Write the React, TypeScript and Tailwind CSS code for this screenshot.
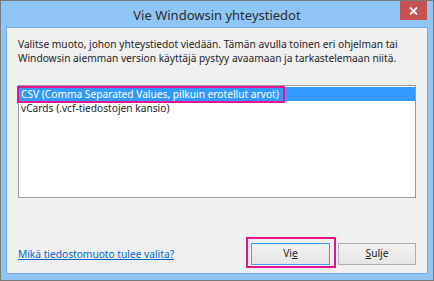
import React from 'react';

const font = { fontFamily: '"Noto Sans", "Open Sans", sans-serif' };

export default function App() {
  return (
    <div
      className="relative w-[434px] h-[281px] border border-[#7a7a7a] bg-[#8fc6f6] flex flex-col text-[#1e1e1e]"
      style={font}
    >
      {/* title bar */}
      <div className="relative h-[26px] flex items-center justify-center">
        <span className="text-[13px] text-[#2b2b2b] leading-none mt-[2px]">
          Vie Windowsin yhteystiedot
        </span>
        <div className="absolute right-[6px] top-0 w-[27px] h-[19px] bg-[#c75050] flex items-center justify-center">
          <svg width="9" height="8" viewBox="0 0 9 8">
            <path d="M1 0.5 L8 7.5 M8 0.5 L1 7.5" stroke="#fff" strokeWidth="1.8" />
          </svg>
        </div>
      </div>

      {/* client area */}
      <div className="mx-[5px] mb-[6px] flex-1 border border-[#6fadeb] bg-[#f0f0f0] flex flex-col px-[11px] pt-[9px] pb-[8px]">
        <p className="text-[10.2px] leading-[14px] text-[#1e1e1e]">
          Valitse muoto, johon yhteystiedot viedään. Tämän avulla toinen eri ohjelman tai
          <br />
          Windowsin aiemman version käyttäjä pystyy avaamaan ja tarkastelemaan niitä.
        </p>

        <div className="mt-[20px] h-[113px] border border-[#9b9b9b] bg-white pt-[1px] text-[10.2px] leading-[14px]">
          <div className="bg-[#3399ff] text-white px-[2px] h-[14px]">
            CSV (Comma Separated Values, pilkuin erotellut arvot)
          </div>
          <div className="px-[2px] h-[14px]">vCards (.vcf-tiedostojen kansio)</div>
        </div>

        <div className="mt-auto flex items-center">
          <a className="text-[10.2px] text-[#0066cc] underline mt-[2px]">
            Mikä tiedostomuoto tulee valita?
          </a>
          <div className="ml-auto flex gap-[8px]">
            <button className="w-[79px] h-[22px] border border-[#3c9bf0] bg-gradient-to-b from-[#f2f2f2] to-[#e5e5e5] text-[10.2px] text-[#1e1e1e] flex items-center justify-center">
              Vi<span className="underline">e</span>
            </button>
            <button className="w-[78px] h-[22px] border border-[#adadad] bg-gradient-to-b from-[#f2f2f2] to-[#e5e5e5] text-[10.2px] text-[#1e1e1e] flex items-center justify-center">
              <span className="underline">S</span>ulje
            </button>
          </div>
        </div>
      </div>

      {/* pink annotation highlights */}
      <div className="absolute left-[16px] top-[85px] w-[268px] h-[17px] border-2 border-[#e6158f]" />
      <div className="absolute left-[245px] top-[236px] w-[90px] h-[31px] border-2 border-[#e6158f]" />
    </div>
  );
}
